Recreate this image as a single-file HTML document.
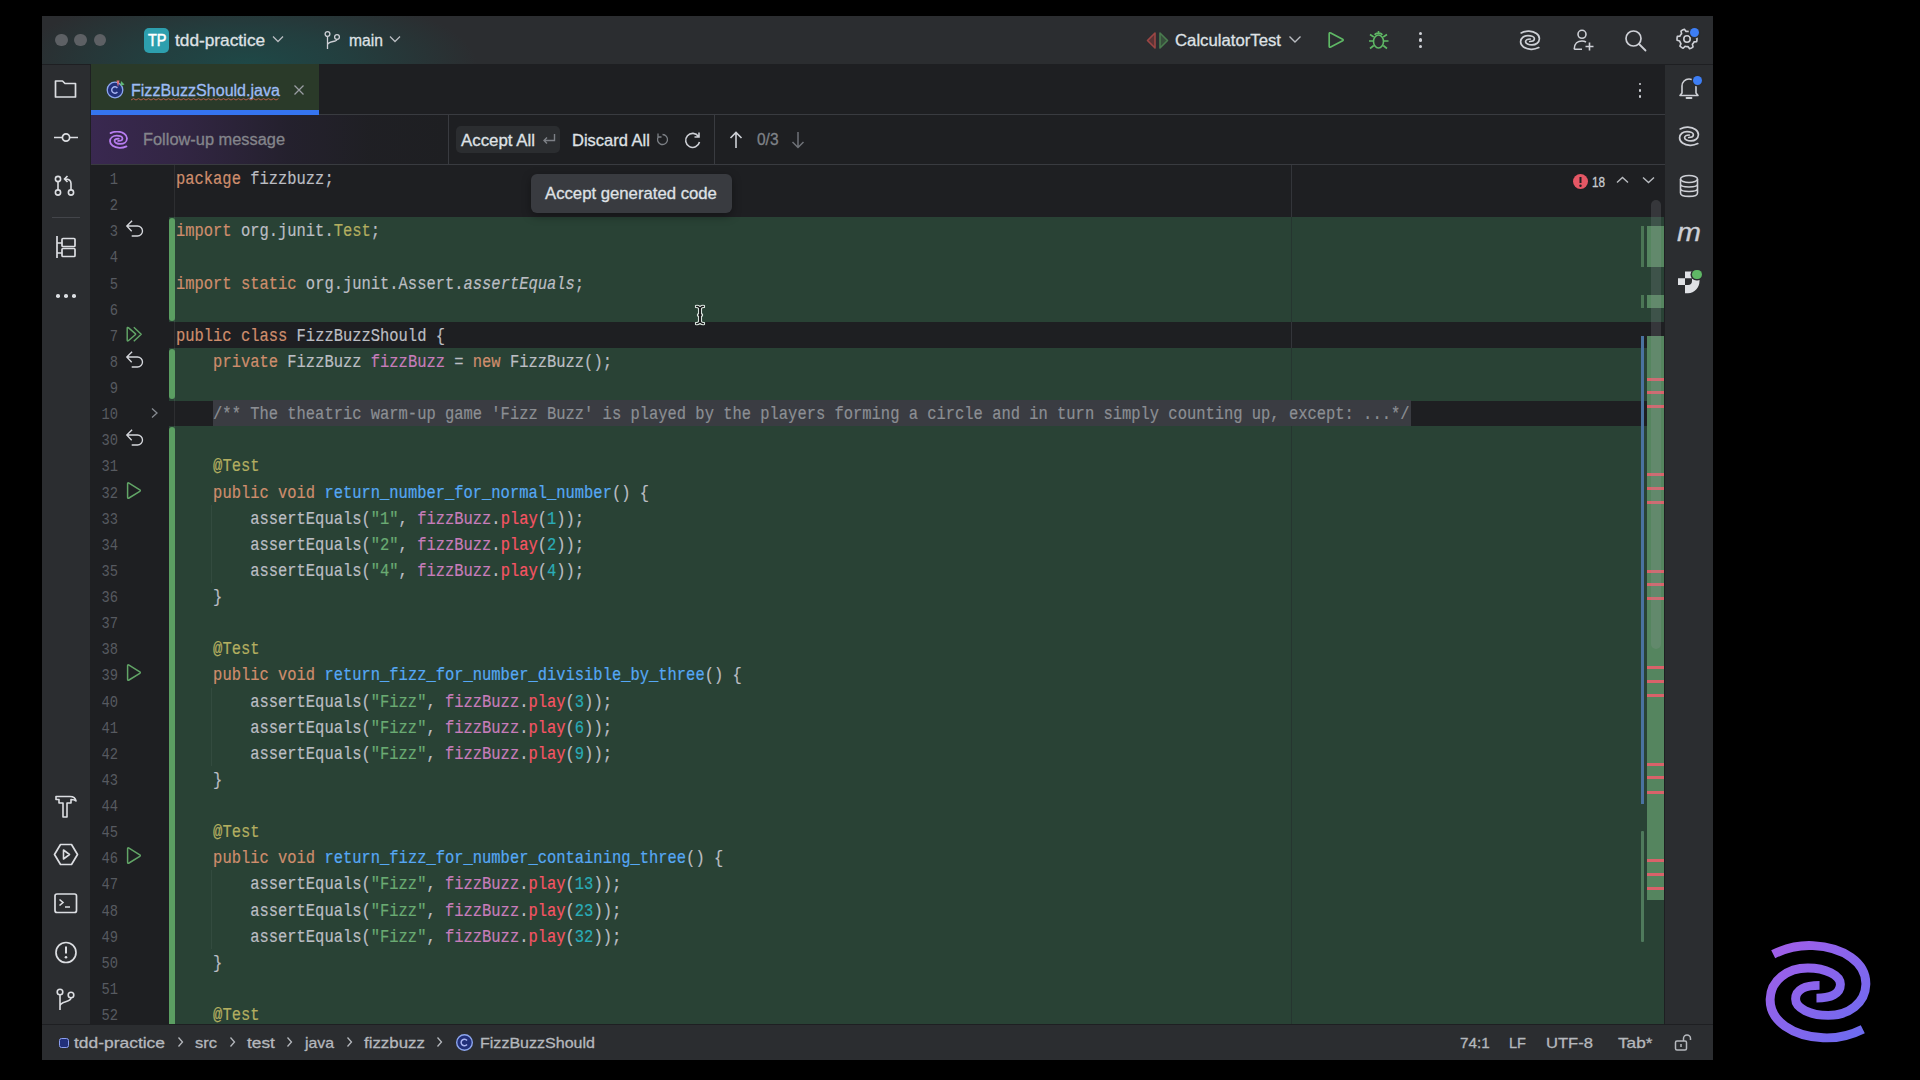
<!DOCTYPE html>
<html><head><meta charset="utf-8"><style>
html,body{margin:0;padding:0}
body{width:1920px;height:1080px;background:#000;position:relative;overflow:hidden;font-family:"Liberation Sans",sans-serif;}
.abs{position:absolute}
#win{position:absolute;left:42px;top:16px;width:1671px;height:1044px;background:#2b2d30;}
#title{position:absolute;left:42px;top:16px;width:1671px;height:48px;background:#2b2d30;overflow:hidden}
#title .glow{position:absolute;left:0;top:0;width:100%;height:100%;background:radial-gradient(ellipse 230px 75px at 205px 48px,rgba(22,90,86,0.6) 0%,rgba(22,90,86,0.38) 45%,rgba(22,90,86,0) 100%)}
#edarea{position:absolute;left:91px;top:64px;width:1574px;height:960px;background:#1e1f22}
#leftstrip{position:absolute;left:42px;top:64px;width:48px;height:960px;background:#2b2d30;border-right:1px solid #1e1f22}
#rightstrip{position:absolute;left:1665px;top:64px;width:48px;height:960px;background:#2b2d30;}
#status{position:absolute;left:42px;top:1024px;width:1671px;height:36px;background:#2b2d30;border-top:1px solid #1e1f22;box-sizing:border-box}
.ui{position:absolute;white-space:pre;font-family:"Liberation Sans",sans-serif;color:#dfe1e5;line-height:1;-webkit-text-stroke:0.3px currentColor}
#editor{position:absolute;left:0;top:0;width:1920px;height:1080px;clip-path:inset(165px 255px 56px 91px)}
.gbg{position:absolute;left:169px;width:1495px;background:linear-gradient(90deg,#294235 0,#294235 1122px,#263530 1122px,#263530 1123px,#294235 1123px)}
.foldhl{position:absolute;left:213.3px;width:1197.5px;background:#3a3c42}
.ln{position:absolute;left:70px;width:48px;text-align:right;font-family:"Liberation Mono",monospace;font-size:16px;transform-origin:100% 0;transform:translateY(2.4px) scaleX(0.86);line-height:26.125px;color:#575a60;height:26px}
.code{position:absolute;left:176.2px;white-space:pre;font-family:"Liberation Mono",monospace;font-size:17.8px;line-height:26.125px;color:#bcbec4;height:26px;-webkit-text-stroke:0.2px currentColor;transform-origin:0 0;transform:translateY(1.3px) scaleX(0.86916)}
.code i{font-style:italic}
.gi{position:absolute}
.gbar{position:absolute;left:169px;width:6px;background:#5b9e62;border-radius:3px}
.sep{position:absolute;background:#393b40}

</style></head><body>
<div id="win"></div>
<div id="title"><div class="glow"></div></div>
<div id="leftstrip"></div>
<div id="rightstrip"></div>
<div id="edarea"></div>
<div class="abs" style="left:42px;top:64px;width:1671px;height:1px;background:#1e1f22"></div>
<div class="abs" style="left:1664px;top:64px;width:1px;height:960px;background:#1e1f22"></div>
<div id="status"></div>
<div class="abs" style="left:1291px;top:165px;width:1px;height:859px;background:#33353a"></div>

<div id="editor">
<div class="gbg" style="top:217.250px;height:26.625px"></div>
<div class="gbg" style="top:243.375px;height:26.625px"></div>
<div class="gbg" style="top:269.500px;height:26.625px"></div>
<div class="gbg" style="top:295.625px;height:26.625px"></div>
<div class="gbg" style="top:347.875px;height:26.625px"></div>
<div class="gbg" style="top:374.000px;height:26.625px"></div>
<div class="foldhl" style="top:400.125px;height:26.125px"></div>
<div class="gbg" style="top:426.250px;height:26.625px"></div>
<div class="gbg" style="top:452.375px;height:26.625px"></div>
<div class="gbg" style="top:478.500px;height:26.625px"></div>
<div class="gbg" style="top:504.625px;height:26.625px"></div>
<div class="gbg" style="top:530.750px;height:26.625px"></div>
<div class="gbg" style="top:556.875px;height:26.625px"></div>
<div class="gbg" style="top:583.000px;height:26.625px"></div>
<div class="gbg" style="top:609.125px;height:26.625px"></div>
<div class="gbg" style="top:635.250px;height:26.625px"></div>
<div class="gbg" style="top:661.375px;height:26.625px"></div>
<div class="gbg" style="top:687.500px;height:26.625px"></div>
<div class="gbg" style="top:713.625px;height:26.625px"></div>
<div class="gbg" style="top:739.750px;height:26.625px"></div>
<div class="gbg" style="top:765.875px;height:26.625px"></div>
<div class="gbg" style="top:792.000px;height:26.625px"></div>
<div class="gbg" style="top:818.125px;height:26.625px"></div>
<div class="gbg" style="top:844.250px;height:26.625px"></div>
<div class="gbg" style="top:870.375px;height:26.625px"></div>
<div class="gbg" style="top:896.500px;height:26.625px"></div>
<div class="gbg" style="top:922.625px;height:26.625px"></div>
<div class="gbg" style="top:948.750px;height:26.625px"></div>
<div class="gbg" style="top:974.875px;height:26.625px"></div>
<div class="gbg" style="top:1001.000px;height:26.625px"></div>
<div class="gbg" style="top:1027.125px;height:26.625px"></div>
<div class="abs" style="left:173.5px;top:165px;width:1px;height:860px;background:rgba(255,255,255,0.07)"></div>
<div class="abs" style="left:210.5px;top:504.62px;width:1px;height:78.38px;background:rgba(255,255,255,0.05)"></div>
<div class="abs" style="left:210.5px;top:687.50px;width:1px;height:78.38px;background:rgba(255,255,255,0.05)"></div>
<div class="abs" style="left:210.5px;top:870.38px;width:1px;height:78.38px;background:rgba(255,255,255,0.05)"></div>
<div class="ln" style="top:165.000px">1</div>
<div class="code" style="top:165.000px"><span style="color:#cf8e6d">package</span> fizzbuzz;</div>
<div class="ln" style="top:191.125px">2</div>
<div class="ln" style="top:217.250px">3</div>
<div class="code" style="top:217.250px"><span style="color:#cf8e6d">import</span> org.junit.<span style="color:#b3ae60">Test</span>;</div>
<svg class="gi" style="left:124px;top:217.25px" width="22" height="22" viewBox="0 0 22 22"><path d="M8.1 3.75 L2.8 9 L7.7 14.3 M2.8 9 H13.5 A5 5 0 0 1 13.5 19 H7.7" fill="none" stroke="#d5d7dc" stroke-width="1.35"/></svg>
<div class="ln" style="top:243.375px">4</div>
<div class="ln" style="top:269.500px">5</div>
<div class="code" style="top:269.500px"><span style="color:#cf8e6d">import</span> <span style="color:#cf8e6d">static</span> org.junit.Assert.<i>assertEquals</i>;</div>
<div class="ln" style="top:295.625px">6</div>
<div class="ln" style="top:321.750px">7</div>
<div class="code" style="top:321.750px"><span style="color:#cf8e6d">public</span> <span style="color:#cf8e6d">class</span> FizzBuzzShould {</div>
<svg class="gi" style="left:124px;top:321.75px" width="22" height="22" viewBox="0 0 22 22"><path d="M3.2 6.2 Q3.2 4.9 4.3 5.6 L11.3 11.6 Q12 12.2 11.3 12.8 L4.3 18.7 Q3.2 19.4 3.2 18.1 Z M9.8 5.2 L17.2 12.2 L9.8 19.3" fill="none" stroke="#62a567" stroke-width="1.45" stroke-linejoin="round"/></svg>
<div class="ln" style="top:347.875px">8</div>
<div class="code" style="top:347.875px">    <span style="color:#cf8e6d">private</span> FizzBuzz <span style="color:#c77dbb">fizzBuzz</span> = <span style="color:#cf8e6d">new</span> FizzBuzz();</div>
<svg class="gi" style="left:124px;top:347.88px" width="22" height="22" viewBox="0 0 22 22"><path d="M8.1 3.75 L2.8 9 L7.7 14.3 M2.8 9 H13.5 A5 5 0 0 1 13.5 19 H7.7" fill="none" stroke="#d5d7dc" stroke-width="1.35"/></svg>
<div class="ln" style="top:374.000px">9</div>
<div class="ln" style="top:400.125px">10</div>
<svg class="gi" style="left:150px;top:407.12px" width="10" height="12" viewBox="0 0 10 12"><path d="M2 1.5 L7 6 L2 10.5" fill="none" stroke="#868a91" stroke-width="1.3"/></svg>
<div class="code" style="top:400.125px;color:#8c8f94">    /** The theatric warm-up game 'Fizz Buzz' is played by the players forming a circle and in turn simply counting up, except: ...*/</div>
<div class="ln" style="top:426.250px">30</div>
<svg class="gi" style="left:124px;top:426.25px" width="22" height="22" viewBox="0 0 22 22"><path d="M8.1 3.75 L2.8 9 L7.7 14.3 M2.8 9 H13.5 A5 5 0 0 1 13.5 19 H7.7" fill="none" stroke="#d5d7dc" stroke-width="1.35"/></svg>
<div class="ln" style="top:452.375px">31</div>
<div class="code" style="top:452.375px">    <span style="color:#b3ae60">@Test</span></div>
<div class="ln" style="top:478.500px">32</div>
<div class="code" style="top:478.500px">    <span style="color:#cf8e6d">public</span> <span style="color:#cf8e6d">void</span> <span style="color:#56a8f5">return_number_for_normal_number</span>() {</div>
<svg class="gi" style="left:124px;top:478.50px" width="20" height="22" viewBox="0 0 20 22"><path d="M3.6 4.8 Q3.6 3.3 5 4.1 L15.8 10.9 Q16.8 11.6 15.8 12.3 L5 19 Q3.6 19.8 3.6 18.3 Z" fill="none" stroke="#62a567" stroke-width="1.5" stroke-linejoin="round"/></svg>
<div class="ln" style="top:504.625px">33</div>
<div class="code" style="top:504.625px">        assertEquals(<span style="color:#6aab73">&quot;1&quot;</span>, <span style="color:#c77dbb">fizzBuzz</span>.<span style="color:#f75464">play</span>(<span style="color:#2aacb8">1</span>));</div>
<div class="ln" style="top:530.750px">34</div>
<div class="code" style="top:530.750px">        assertEquals(<span style="color:#6aab73">&quot;2&quot;</span>, <span style="color:#c77dbb">fizzBuzz</span>.<span style="color:#f75464">play</span>(<span style="color:#2aacb8">2</span>));</div>
<div class="ln" style="top:556.875px">35</div>
<div class="code" style="top:556.875px">        assertEquals(<span style="color:#6aab73">&quot;4&quot;</span>, <span style="color:#c77dbb">fizzBuzz</span>.<span style="color:#f75464">play</span>(<span style="color:#2aacb8">4</span>));</div>
<div class="ln" style="top:583.000px">36</div>
<div class="code" style="top:583.000px">    }</div>
<div class="ln" style="top:609.125px">37</div>
<div class="ln" style="top:635.250px">38</div>
<div class="code" style="top:635.250px">    <span style="color:#b3ae60">@Test</span></div>
<div class="ln" style="top:661.375px">39</div>
<div class="code" style="top:661.375px">    <span style="color:#cf8e6d">public</span> <span style="color:#cf8e6d">void</span> <span style="color:#56a8f5">return_fizz_for_number_divisible_by_three</span>() {</div>
<svg class="gi" style="left:124px;top:661.38px" width="20" height="22" viewBox="0 0 20 22"><path d="M3.6 4.8 Q3.6 3.3 5 4.1 L15.8 10.9 Q16.8 11.6 15.8 12.3 L5 19 Q3.6 19.8 3.6 18.3 Z" fill="none" stroke="#62a567" stroke-width="1.5" stroke-linejoin="round"/></svg>
<div class="ln" style="top:687.500px">40</div>
<div class="code" style="top:687.500px">        assertEquals(<span style="color:#6aab73">&quot;Fizz&quot;</span>, <span style="color:#c77dbb">fizzBuzz</span>.<span style="color:#f75464">play</span>(<span style="color:#2aacb8">3</span>));</div>
<div class="ln" style="top:713.625px">41</div>
<div class="code" style="top:713.625px">        assertEquals(<span style="color:#6aab73">&quot;Fizz&quot;</span>, <span style="color:#c77dbb">fizzBuzz</span>.<span style="color:#f75464">play</span>(<span style="color:#2aacb8">6</span>));</div>
<div class="ln" style="top:739.750px">42</div>
<div class="code" style="top:739.750px">        assertEquals(<span style="color:#6aab73">&quot;Fizz&quot;</span>, <span style="color:#c77dbb">fizzBuzz</span>.<span style="color:#f75464">play</span>(<span style="color:#2aacb8">9</span>));</div>
<div class="ln" style="top:765.875px">43</div>
<div class="code" style="top:765.875px">    }</div>
<div class="ln" style="top:792.000px">44</div>
<div class="ln" style="top:818.125px">45</div>
<div class="code" style="top:818.125px">    <span style="color:#b3ae60">@Test</span></div>
<div class="ln" style="top:844.250px">46</div>
<div class="code" style="top:844.250px">    <span style="color:#cf8e6d">public</span> <span style="color:#cf8e6d">void</span> <span style="color:#56a8f5">return_fizz_for_number_containing_three</span>() {</div>
<svg class="gi" style="left:124px;top:844.25px" width="20" height="22" viewBox="0 0 20 22"><path d="M3.6 4.8 Q3.6 3.3 5 4.1 L15.8 10.9 Q16.8 11.6 15.8 12.3 L5 19 Q3.6 19.8 3.6 18.3 Z" fill="none" stroke="#62a567" stroke-width="1.5" stroke-linejoin="round"/></svg>
<div class="ln" style="top:870.375px">47</div>
<div class="code" style="top:870.375px">        assertEquals(<span style="color:#6aab73">&quot;Fizz&quot;</span>, <span style="color:#c77dbb">fizzBuzz</span>.<span style="color:#f75464">play</span>(<span style="color:#2aacb8">13</span>));</div>
<div class="ln" style="top:896.500px">48</div>
<div class="code" style="top:896.500px">        assertEquals(<span style="color:#6aab73">&quot;Fizz&quot;</span>, <span style="color:#c77dbb">fizzBuzz</span>.<span style="color:#f75464">play</span>(<span style="color:#2aacb8">23</span>));</div>
<div class="ln" style="top:922.625px">49</div>
<div class="code" style="top:922.625px">        assertEquals(<span style="color:#6aab73">&quot;Fizz&quot;</span>, <span style="color:#c77dbb">fizzBuzz</span>.<span style="color:#f75464">play</span>(<span style="color:#2aacb8">32</span>));</div>
<div class="ln" style="top:948.750px">50</div>
<div class="code" style="top:948.750px">    }</div>
<div class="ln" style="top:974.875px">51</div>
<div class="ln" style="top:1001.000px">52</div>
<div class="code" style="top:1001.000px">    <span style="color:#b3ae60">@Test</span></div>
<div class="ln" style="top:1027.125px">53</div>
<div class="gbar" style="top:218.25px;height:102.50px"></div>
<div class="gbar" style="top:348.88px;height:50.25px"></div>
<div class="gbar" style="top:427.25px;height:625.00px"></div>
</div>
<div class="abs" style="left:55.2px;top:33.8px;width:12.4px;height:12.4px;border-radius:50%;background:#5d6064"></div>
<div class="abs" style="left:74.4px;top:33.8px;width:12.4px;height:12.4px;border-radius:50%;background:#5d6064"></div>
<div class="abs" style="left:93.7px;top:33.8px;width:12.4px;height:12.4px;border-radius:50%;background:#5d6064"></div>
<div class="abs" style="left:144px;top:28px;width:24.5px;height:24.5px;background:#2d9fae;border-radius:5px"></div>
<div class="ui" style="left:147.50px;top:31.61px;font-size:17px;color:#ffffff;transform:scaleX(0.8502);transform-origin:0 0;-webkit-text-stroke:0.55px #fff;">TP</div>
<div class="ui" style="left:175.00px;top:31.90px;font-size:16.3px;color:#dfe1e5;transform:scaleX(1.0603);transform-origin:0 0;">tdd-practice</div>
<svg class="gi" style="left:272px;top:35px;" width="12" height="9" viewBox="0 0 12 9"><path d="M1 1.5 L6 6.5 L11 1.5" fill="none" stroke="#b9bcc1" stroke-width="1.3"/></svg>
<svg class="gi" style="left:324px;top:30px;" width="17" height="20" viewBox="0 0 17 20"><circle cx="3.5" cy="4" r="2.4" fill="none" stroke="#ced0d6" stroke-width="1.3"/><circle cx="13" cy="7" r="2.4" fill="none" stroke="#ced0d6" stroke-width="1.3"/><path d="M3.5 6.4 V19 M3.5 15 C3.5 11 13 12 13 9.4" fill="none" stroke="#ced0d6" stroke-width="1.3"/></svg>
<div class="ui" style="left:349.30px;top:31.90px;font-size:16.3px;color:#dfe1e5;transform:scaleX(0.9612);transform-origin:0 0;">main</div>
<svg class="gi" style="left:389px;top:35px;" width="12" height="9" viewBox="0 0 12 9"><path d="M1 1.5 L6 6.5 L11 1.5" fill="none" stroke="#b9bcc1" stroke-width="1.3"/></svg>
<svg class="gi" style="left:1145px;top:31px;" width="26" height="19" viewBox="0 0 26 19"><path d="M10 2 L2.5 9.5 L10 17 Z" fill="rgba(150,60,60,0.45)" stroke="#9c4644" stroke-width="1.6" stroke-linejoin="round"/><path d="M15 2 L22.5 9.5 L15 17 Z" fill="rgba(70,120,75,0.45)" stroke="#4a7b4e" stroke-width="1.6" stroke-linejoin="round"/></svg>
<div class="ui" style="left:1175.00px;top:32.03px;font-size:16.5px;color:#dfe1e5;transform:scaleX(1.0141);transform-origin:0 0;">CalculatorTest</div>
<svg class="gi" style="left:1288px;top:35px;" width="14" height="10" viewBox="0 0 14 10"><path d="M1.5 1.5 L7 7 L12.5 1.5" fill="none" stroke="#b9bcc1" stroke-width="1.4"/></svg>
<svg class="gi" style="left:1326px;top:30px;" width="20" height="20" viewBox="0 0 20 20"><path d="M3.2 3.8 Q3.2 2.2 4.7 3 L16.6 9.2 Q17.8 10 16.6 10.8 L4.7 17 Q3.2 17.8 3.2 16.2 Z" fill="none" stroke="#5fb865" stroke-width="1.7" stroke-linejoin="round"/></svg>
<svg class="gi" style="left:1367px;top:29px;" width="23" height="22" viewBox="0 0 23 22"><ellipse cx="11.5" cy="12.5" rx="5" ry="6.5" fill="none" stroke="#5fb865" stroke-width="1.6"/><path d="M8 6 C8 3.5 15 3.5 15 6 M6.5 12 H2 M17 12 H21.5 M6.8 8 L3 5.5 M16.2 8 L20 5.5 M6.8 16.5 L3 19.5 M16.2 16.5 L20 19.5 M11.5 2 V4" fill="none" stroke="#5fb865" stroke-width="1.6"/></svg>
<div class="abs" style="left:1419.3px;top:31.9px;width:3.2px;height:3.2px;border-radius:50%;background:#ced0d6"></div>
<div class="abs" style="left:1419.3px;top:38.4px;width:3.2px;height:3.2px;border-radius:50%;background:#ced0d6"></div>
<div class="abs" style="left:1419.3px;top:44.9px;width:3.2px;height:3.2px;border-radius:50%;background:#ced0d6"></div>
<svg class="gi" style="left:1519px;top:29.5px;" width="22" height="21" viewBox="-1 -0.5 22 21"><path d="M1.2,2.4 C4,1 7,0.6 9,0.7 C15,1 19.5,4 19.4,8.3 C19.3,12 16,14.4 12,14.4 C8.5,14.4 5.6,13 5.6,11.2 C5.6,9.3 7.5,8.5 10.3,8.5 M18.8,17.1 C16,18.5 13,18.9 11,18.8 C5,18.5 0.5,15.5 0.6,11.2 C0.7,7.5 4,5.1 8,5.1 C11.5,5.1 14.4,6.5 14.4,8.3 C14.4,10.2 12.5,11 9.7,11" fill="none" stroke="#ced0d6" stroke-width="1.7" stroke-linecap="round"/></svg>
<svg class="gi" style="left:1572px;top:28px;" width="24" height="24" viewBox="0 0 24 24"><circle cx="10" cy="6.3" r="4" fill="none" stroke="#ced0d6" stroke-width="1.6"/><path d="M2.2 21.2 C2.2 15.5 6 13 10 13 C11.5 13 12.8 13.3 14 14 M2.2 21.2 H10 M17.5 14.5 V22.5 M13.5 18.5 H21.5" fill="none" stroke="#ced0d6" stroke-width="1.6"/></svg>
<svg class="gi" style="left:1624px;top:29px;" width="23" height="23" viewBox="0 0 23 23"><circle cx="9.5" cy="9.5" r="7.5" fill="none" stroke="#ced0d6" stroke-width="1.7"/><path d="M15 15 L21.5 21.5" stroke="#ced0d6" stroke-width="1.8" stroke-linecap="round"/></svg>
<svg class="gi" style="left:1676px;top:28px;" width="22" height="22" viewBox="0 0 22 22"><polygon points="21.00,11.00 20.91,12.31 20.66,13.59 18.02,13.91 17.58,14.80 17.03,15.63 16.37,16.37 17.09,18.93 16.00,19.66 14.83,20.24 13.59,20.66 11.99,18.53 11.00,18.60 10.01,18.53 9.03,18.34 7.17,20.24 6.00,19.66 4.91,18.93 3.93,18.07 4.97,15.63 4.42,14.80 3.98,13.91 3.66,12.97 1.09,12.31 1.00,11.00 1.09,9.69 1.34,8.41 3.98,8.09 4.42,7.20 4.97,6.37 5.63,5.63 4.91,3.07 6.00,2.34 7.17,1.76 8.41,1.34 10.01,3.47 11.00,3.40 11.99,3.47 12.97,3.66 14.83,1.76 16.00,2.34 17.09,3.07 18.07,3.93 17.03,6.37 17.58,7.20 18.02,8.09 18.34,9.03 20.91,9.69" fill="none" stroke="#ced0d6" stroke-width="1.6" stroke-linejoin="round"/><circle cx="11" cy="11" r="3.2" fill="none" stroke="#ced0d6" stroke-width="1.6"/></svg>
<div class="abs" style="left:1689.5px;top:27.5px;width:9px;height:9px;border-radius:50%;background:#3d7ef5;box-shadow:0 0 0 1.5px #2b2d30"></div>
<div class="abs" style="left:91px;top:64px;width:228px;height:50px;background:#2a3a29;"></div>
<div class="abs" style="left:91px;top:110px;width:228px;height:4.5px;background:#3574f0;"></div>
<div class="abs" style="left:319px;top:114px;width:1346px;height:1px;background:#393b40;"></div>
<svg class="gi" style="left:105px;top:78px;" width="22" height="22" viewBox="0 0 22 22"><circle cx="10" cy="12" r="7.8" fill="#22307a" stroke="#8da6ee" stroke-width="1.3"/><path d="M12.4 10 A3.2 3.2 0 1 0 12.4 14" fill="none" stroke="#a9b4f2" stroke-width="1.4"/><path d="M11.5 2.5 L14.5 2.5 L13 9 Z" fill="#e0707a"/><path d="M16 3 L19.5 6.5 L15.5 8 Z" fill="#5fb872"/></svg>
<div class="ui" style="left:131.00px;top:82.92px;font-size:15.8px;color:#9dbcf4;transform:scaleX(1.0157);transform-origin:0 0;">FizzBuzzShould.java</div>
<svg class="gi" style="left:0px;top:0px;" width="300" height="110" viewBox="0 0 300 110"><path d="M131.0 100L133.5 98.6L136.0 100L138.5 98.6L141.0 100L143.5 98.6L146.0 100L148.5 98.6L151.0 100L153.5 98.6L156.0 100L158.5 98.6L161.0 100L163.5 98.6L166.0 100L168.5 98.6L171.0 100L173.5 98.6L176.0 100L178.5 98.6L181.0 100L183.5 98.6L186.0 100L188.5 98.6L191.0 100L193.5 98.6L196.0 100L198.5 98.6L201.0 100L203.5 98.6L206.0 100L208.5 98.6L211.0 100L213.5 98.6L216.0 100L218.5 98.6L221.0 100L223.5 98.6L226.0 100L228.5 98.6L231.0 100L233.5 98.6L236.0 100L238.5 98.6L241.0 100L243.5 98.6L246.0 100L248.5 98.6L251.0 100L253.5 98.6L256.0 100L258.5 98.6L261.0 100L263.5 98.6L266.0 100L268.5 98.6L271.0 100L273.5 98.6L276.0 100L278.5 98.6" fill="none" stroke="#c2624f" stroke-width="0.9"/></svg>
<svg class="gi" style="left:293px;top:84px;" width="12" height="12" viewBox="0 0 12 12"><path d="M1.5 1.5 L10.5 10.5 M10.5 1.5 L1.5 10.5" stroke="#9a9da3" stroke-width="1.3"/></svg>
<div class="abs" style="left:1638.5px;top:82.6px;width:2.8px;height:2.8px;border-radius:50%;background:#ced0d6"></div>
<div class="abs" style="left:1638.5px;top:88.8px;width:2.8px;height:2.8px;border-radius:50%;background:#ced0d6"></div>
<div class="abs" style="left:1638.5px;top:95.0px;width:2.8px;height:2.8px;border-radius:50%;background:#ced0d6"></div>
<div class="abs" style="left:91px;top:115px;width:357px;height:49px;background:linear-gradient(90deg,rgba(74,46,108,0.62) 0%,rgba(70,44,100,0.5) 25%,rgba(50,36,72,0.3) 55%,rgba(40,34,50,0.12) 78%,rgba(30,31,34,0) 100%)"></div>
<div class="abs" style="left:91px;top:164px;width:1574px;height:1px;background:#393b40;"></div>
<div class="abs" style="left:448px;top:115px;width:1px;height:49px;background:#393b40;"></div>
<div class="abs" style="left:714px;top:115px;width:1px;height:49px;background:#393b40;"></div>
<svg class="gi" style="left:109px;top:131px;" width="19" height="18" viewBox="0 0 20 20"><path d="M1.2,2.4 C4,1 7,0.6 9,0.7 C15,1 19.5,4 19.4,8.3 C19.3,12 16,14.4 12,14.4 C8.5,14.4 5.6,13 5.6,11.2 C5.6,9.3 7.5,8.5 10.3,8.5 M18.8,17.1 C16,18.5 13,18.9 11,18.8 C5,18.5 0.5,15.5 0.6,11.2 C0.7,7.5 4,5.1 8,5.1 C11.5,5.1 14.4,6.5 14.4,8.3 C14.4,10.2 12.5,11 9.7,11" fill="none" stroke="#b77df0" stroke-width="2" stroke-linecap="round"/></svg>
<div class="ui" style="left:143.00px;top:131.75px;font-size:16px;color:#84858b;transform:scaleX(1.0236);transform-origin:0 0;">Follow-up message</div>
<div class="abs" style="left:456px;top:126px;width:104px;height:27px;background:#2b2d30;border-radius:5px"></div>
<div class="ui" style="left:461.00px;top:132.08px;font-size:16.2px;color:#dfe1e5;transform:scaleX(1.0405);transform-origin:0 0;">Accept All</div>
<svg class="gi" style="left:541px;top:132px;" width="16" height="14" viewBox="0 0 16 14"><path d="M13.5 2 V8.5 H3 M6 5.5 L3 8.5 L6 11.5" fill="none" stroke="#7d8086" stroke-width="1.4"/></svg>
<div class="ui" style="left:572.00px;top:132.08px;font-size:16.2px;color:#dfe1e5;transform:scaleX(1.0190);transform-origin:0 0;">Discard All</div>
<svg class="gi" style="left:656px;top:132px;" width="13" height="14" viewBox="0 0 13 14"><path d="M2.5 4.5 A5 5 0 1 0 6.5 2.5 M2 1.5 V5 H5.5" fill="none" stroke="#7d8086" stroke-width="1.3"/></svg>
<svg class="gi" style="left:683px;top:130px;" width="20" height="20" viewBox="0 0 20 20"><path d="M15.5 6.5 A7 7 0 1 0 16.5 12 M16 2.5 V7 H11.5" fill="none" stroke="#ced0d6" stroke-width="1.6"/></svg>
<svg class="gi" style="left:728px;top:130px;" width="16" height="20" viewBox="0 0 16 20"><path d="M8 2.5 V18 M2.5 8 L8 2.5 L13.5 8" fill="none" stroke="#ced0d6" stroke-width="1.6"/></svg>
<div class="ui" style="left:756.50px;top:132.25px;font-size:16px;color:#7f8288;transform:scaleX(0.9667);transform-origin:0 0;">0/3</div>
<svg class="gi" style="left:790px;top:130px;" width="16" height="20" viewBox="0 0 16 20"><path d="M8 2 V17.5 M2.5 12 L8 17.5 L13.5 12" fill="none" stroke="#6f7278" stroke-width="1.5"/></svg>
<div class="abs" style="left:530.5px;top:173.5px;width:201px;height:39px;background:#393b40;border-radius:6px;box-shadow:0 3px 10px rgba(0,0,0,0.35)"></div>
<div class="ui" style="left:545.00px;top:185.48px;font-size:16.2px;color:#dfe1e5;transform:scaleX(1.0323);transform-origin:0 0;">Accept generated code</div>
<svg class="gi" style="left:1677px;top:75px;" width="24" height="26" viewBox="0 0 24 26"><path d="M5 18 V11 A7 7 0 0 1 19 11 V18 L21 20.5 H3 Z" fill="none" stroke="#ced0d6" stroke-width="1.6" stroke-linejoin="round"/><path d="M9.5 23 H14.5" stroke="#ced0d6" stroke-width="1.8" stroke-linecap="round"/></svg>
<div class="abs" style="left:1692.5px;top:76.2px;width:9px;height:9px;border-radius:50%;background:#3d7ef5;box-shadow:0 0 0 1.5px #2b2d30"></div>
<svg class="gi" style="left:1678px;top:126px;" width="22" height="21" viewBox="-1 -0.5 22 21"><path d="M1.2,2.4 C4,1 7,0.6 9,0.7 C15,1 19.5,4 19.4,8.3 C19.3,12 16,14.4 12,14.4 C8.5,14.4 5.6,13 5.6,11.2 C5.6,9.3 7.5,8.5 10.3,8.5 M18.8,17.1 C16,18.5 13,18.9 11,18.8 C5,18.5 0.5,15.5 0.6,11.2 C0.7,7.5 4,5.1 8,5.1 C11.5,5.1 14.4,6.5 14.4,8.3 C14.4,10.2 12.5,11 9.7,11" fill="none" stroke="#ced0d6" stroke-width="1.7" stroke-linecap="round"/></svg>
<svg class="gi" style="left:1678px;top:174px;" width="22" height="24" viewBox="0 0 22 24"><ellipse cx="11" cy="5" rx="8.5" ry="3.5" fill="none" stroke="#ced0d6" stroke-width="1.6"/><path d="M2.5 5 V19 C2.5 23.5 19.5 23.5 19.5 19 V5 M2.5 10 C2.5 14 19.5 14 19.5 10 M2.5 14.5 C2.5 18.5 19.5 18.5 19.5 14.5" fill="none" stroke="#ced0d6" stroke-width="1.6"/></svg>
<div class="ui" style="left:1677px;top:220px;font-size:25px;font-style:italic;color:#ced0d6;transform:scaleX(1.15);transform-origin:0 0">m</div>
<svg class="gi" style="left:1677px;top:270px;" width="24" height="24" viewBox="0 0 24 24"><path d="M1 8.2 H8 V15 H1 Z M8 1.5 H15 V8.2 H8 Z" fill="#dfe1e5"/><path d="M8 23.2 V15 H11 C13.5 15 15 13.5 15 11 V8.2 H22.5 V11 C22.5 17.5 17.5 23.2 11 23.2 Z" fill="#dfe1e5"/></svg>
<div class="abs" style="left:1692.3px;top:269.5px;width:9.5px;height:9.5px;border-radius:50%;background:#5fb865;box-shadow:0 0 0 1.5px #2b2d30"></div>
<svg class="gi" style="left:53px;top:78px;" width="26" height="22" viewBox="0 0 26 22"><path d="M2.5 3 H9.5 L12 5.5 H22.5 V19 H2.5 Z" fill="none" stroke="#dcdee2" stroke-width="1.7" stroke-linejoin="round"/></svg>
<svg class="gi" style="left:52px;top:130px;" width="28" height="16" viewBox="0 0 28 16"><circle cx="14" cy="7.5" r="3.6" fill="none" stroke="#dcdee2" stroke-width="1.7"/><path d="M2 7.5 H10.4 M17.6 7.5 H26" stroke="#dcdee2" stroke-width="1.7"/></svg>
<svg class="gi" style="left:53px;top:174px;" width="24" height="24" viewBox="0 0 24 24"><circle cx="5" cy="5" r="2.6" fill="none" stroke="#dcdee2" stroke-width="1.6"/><circle cx="5" cy="18.5" r="2.6" fill="none" stroke="#dcdee2" stroke-width="1.6"/><circle cx="18" cy="18.5" r="2.6" fill="none" stroke="#dcdee2" stroke-width="1.6"/><path d="M5 7.6 V15.9 M18 15.9 V9.5 C18 6.5 16 5 12 5 M14.5 2 L11.5 5 L14.5 8" fill="none" stroke="#dcdee2" stroke-width="1.6"/></svg>
<div class="abs" style="left:52px;top:217px;width:28px;height:1px;background:#43454a;"></div>
<svg class="gi" style="left:54px;top:234px;" width="24" height="26" viewBox="0 0 24 26"><path d="M3 2 V24 M3 9 H8 M3 19 H8" fill="none" stroke="#dcdee2" stroke-width="1.7"/><rect x="8" y="4.5" width="13" height="8" rx="1" fill="none" stroke="#dcdee2" stroke-width="1.7"/><rect x="8" y="14.5" width="13" height="8" rx="1" fill="none" stroke="#dcdee2" stroke-width="1.7"/></svg>
<div class="abs" style="left:56.2px;top:294.2px;width:3.6px;height:3.6px;border-radius:50%;background:#dcdee2"></div>
<div class="abs" style="left:64.2px;top:294.2px;width:3.6px;height:3.6px;border-radius:50%;background:#dcdee2"></div>
<div class="abs" style="left:72.2px;top:294.2px;width:3.6px;height:3.6px;border-radius:50%;background:#dcdee2"></div>
<svg class="gi" style="left:53px;top:793px;" width="26" height="27" viewBox="0 0 26 27"><path d="M3 3.5 H17 C20 3.5 22.5 5 23 8 C21.5 6.5 20 6.5 18 6.5 V10 H14 V24 H10 V10 H6 V6.5 H3 Z" fill="none" stroke="#dcdee2" stroke-width="1.6" stroke-linejoin="round"/></svg>
<svg class="gi" style="left:53px;top:842px;" width="26" height="25" viewBox="0 0 26 25"><path d="M7.5 2.5 H18.5 L24.5 12.5 L18.5 22.5 H7.5 L1.5 12.5 Z" fill="none" stroke="#dcdee2" stroke-width="1.7" stroke-linejoin="round"/><path d="M10.5 8 L16.5 12.5 L10.5 17 Z" fill="none" stroke="#dcdee2" stroke-width="1.6" stroke-linejoin="round"/></svg>
<svg class="gi" style="left:53px;top:891px;" width="26" height="25" viewBox="0 0 26 25"><rect x="2" y="3" width="21.5" height="18.5" rx="2" fill="none" stroke="#dcdee2" stroke-width="1.7"/><path d="M6.5 8.5 L10 11.5 L6.5 14.5 M12 16 H17" fill="none" stroke="#dcdee2" stroke-width="1.6"/></svg>
<svg class="gi" style="left:53px;top:940px;" width="26" height="25" viewBox="0 0 26 25"><circle cx="13" cy="12.5" r="10" fill="none" stroke="#dcdee2" stroke-width="1.7"/><path d="M13 6.5 V13.5" stroke="#dcdee2" stroke-width="2"/><circle cx="13" cy="17.2" r="1.3" fill="#dcdee2"/></svg>
<svg class="gi" style="left:53px;top:987px;" width="26" height="25" viewBox="0 0 26 25"><circle cx="7" cy="5" r="2.8" fill="none" stroke="#dcdee2" stroke-width="1.6"/><circle cx="18" cy="8" r="2.8" fill="none" stroke="#dcdee2" stroke-width="1.6"/><path d="M7 7.8 V23 M7 19 C7 14 18 15.5 18 10.8" fill="none" stroke="#dcdee2" stroke-width="1.6"/></svg>
<div class="abs" style="left:59.2px;top:1037.8px;width:10.2px;height:10.2px;border:1.5px solid #8a9ef0;background:#22307a;border-radius:2.5px;box-sizing:border-box"></div>
<div class="ui" style="left:74.00px;top:1034.90px;font-size:15px;color:#b5b8bd;transform:scaleX(1.1611);transform-origin:0 0;">tdd-practice</div>
<svg class="gi" style="left:177px;top:1036px;" width="8" height="12" viewBox="0 0 8 12"><path d="M1.5 1.5 L5.5 6 L1.5 10.5" fill="none" stroke="#b5b8bd" stroke-width="1.3"/></svg>
<svg class="gi" style="left:228.5px;top:1036px;" width="8" height="12" viewBox="0 0 8 12"><path d="M1.5 1.5 L5.5 6 L1.5 10.5" fill="none" stroke="#b5b8bd" stroke-width="1.3"/></svg>
<svg class="gi" style="left:286px;top:1036px;" width="8" height="12" viewBox="0 0 8 12"><path d="M1.5 1.5 L5.5 6 L1.5 10.5" fill="none" stroke="#b5b8bd" stroke-width="1.3"/></svg>
<svg class="gi" style="left:345.7px;top:1036px;" width="8" height="12" viewBox="0 0 8 12"><path d="M1.5 1.5 L5.5 6 L1.5 10.5" fill="none" stroke="#b5b8bd" stroke-width="1.3"/></svg>
<svg class="gi" style="left:436px;top:1036px;" width="8" height="12" viewBox="0 0 8 12"><path d="M1.5 1.5 L5.5 6 L1.5 10.5" fill="none" stroke="#b5b8bd" stroke-width="1.3"/></svg>
<div class="ui" style="left:195.00px;top:1034.90px;font-size:15px;color:#b5b8bd;transform:scaleX(1.0986);transform-origin:0 0;">src</div>
<div class="ui" style="left:247.00px;top:1034.90px;font-size:15px;color:#b5b8bd;transform:scaleX(1.1511);transform-origin:0 0;">test</div>
<div class="ui" style="left:304.90px;top:1034.90px;font-size:15px;color:#b5b8bd;transform:scaleX(1.0545);transform-origin:0 0;">java</div>
<div class="ui" style="left:364.00px;top:1034.90px;font-size:15px;color:#b5b8bd;transform:scaleX(1.1228);transform-origin:0 0;">fizzbuzz</div>
<svg class="gi" style="left:455px;top:1033px;" width="19" height="19" viewBox="0 0 19 19"><circle cx="9.5" cy="9.5" r="7.8" fill="#22307a" stroke="#8da6ee" stroke-width="1.4"/><path d="M12 7.4 A3.3 3.3 0 1 0 12 11.6" fill="none" stroke="#a9b4f2" stroke-width="1.5"/></svg>
<div class="ui" style="left:479.50px;top:1034.90px;font-size:15px;color:#b5b8bd;transform:scaleX(1.0693);transform-origin:0 0;">FizzBuzzShould</div>
<div class="ui" style="left:1460.00px;top:1034.90px;font-size:15px;color:#b5b8bd;transform:scaleX(1.0180);transform-origin:0 0;">74:1</div>
<div class="ui" style="left:1509.00px;top:1034.90px;font-size:15px;color:#b5b8bd;transform:scaleX(0.9728);transform-origin:0 0;">LF</div>
<div class="ui" style="left:1546.00px;top:1034.90px;font-size:15px;color:#b5b8bd;transform:scaleX(1.1052);transform-origin:0 0;">UTF-8</div>
<div class="ui" style="left:1617.60px;top:1034.90px;font-size:15px;color:#b5b8bd;transform:scaleX(1.1467);transform-origin:0 0;">Tab*</div>
<svg class="gi" style="left:1673px;top:1033px;" width="21" height="19" viewBox="0 0 21 19"><rect x="2.5" y="8" width="11" height="9" rx="1.5" fill="none" stroke="#b5b8bd" stroke-width="1.5"/><path d="M10.5 8 V5.5 A3.5 3.5 0 0 1 17.5 5.5 V7" fill="none" stroke="#b5b8bd" stroke-width="1.5"/><path d="M8 11 V14" stroke="#b5b8bd" stroke-width="1.5"/></svg>
<svg class="gi" style="left:1762px;top:937px" width="112" height="112" viewBox="-1 -1 22 22"><defs><linearGradient id="lg" x1="0" y1="0" x2="1" y2="1"><stop offset="0" stop-color="#a35ee8"/><stop offset="1" stop-color="#6b6cf0"/></linearGradient></defs><path d="M1.2,2.4 C4,1 7,0.6 9,0.7 C15,1 19.5,4 19.4,8.3 C19.3,12 16,14.4 12,14.4 C8.5,14.4 5.6,13 5.6,11.2 C5.6,9.3 7.5,8.5 10.3,8.5 M18.8,17.1 C16,18.5 13,18.9 11,18.8 C5,18.5 0.5,15.5 0.6,11.2 C0.7,7.5 4,5.1 8,5.1 C11.5,5.1 14.4,6.5 14.4,8.3 C14.4,10.2 12.5,11 9.7,11" fill="none" stroke="url(#lg)" stroke-width="1.75" stroke-linecap="butt"/></svg>
<div class="abs" style="left:1258px;top:165px;width:406px;height:52px;background:transparent"></div>
<svg class="gi" style="left:1572px;top:173px;" width="17" height="17" viewBox="0 0 17 17"><circle cx="8.5" cy="8.5" r="7.5" fill="#e55765"/><path d="M8.5 4 V10" stroke="#1e1f22" stroke-width="2"/><circle cx="8.5" cy="12.8" r="1.2" fill="#1e1f22"/></svg>
<div class="ui" style="left:1591.50px;top:174.95px;font-size:14px;color:#c9ccd1;transform:scaleX(0.8366);transform-origin:0 0;">18</div>
<svg class="gi" style="left:1615px;top:175px;" width="15" height="10" viewBox="0 0 15 10"><path d="M2 7.5 L7.5 2.5 L13 7.5" fill="none" stroke="#b9bcc1" stroke-width="1.4"/></svg>
<svg class="gi" style="left:1641px;top:175px;" width="15" height="10" viewBox="0 0 15 10"><path d="M2 2.5 L7.5 7.5 L13 2.5" fill="none" stroke="#b9bcc1" stroke-width="1.4"/></svg>
<div class="abs" style="left:1641px;top:225.5px;width:2.8px;height:41px;background:#4b7655;"></div>
<div class="abs" style="left:1646.7px;top:225.5px;width:17.3px;height:41px;background:#55855f;"></div>
<div class="abs" style="left:1641px;top:294.5px;width:2.8px;height:13px;background:#4b7655;"></div>
<div class="abs" style="left:1646.7px;top:294.5px;width:17.3px;height:13px;background:#55855f;"></div>
<div class="abs" style="left:1646.7px;top:336px;width:17.3px;height:563.5px;background:#55855f;"></div>
<div class="abs" style="left:1641px;top:336px;width:2.8px;height:468px;background:#4a72a0;"></div>
<div class="abs" style="left:1641px;top:830.5px;width:2.5px;height:111px;background:#4f7a5c;border-radius:1px"></div>
<div class="abs" style="left:1646.7px;top:377.5px;width:17.3px;height:3px;background:#d9626a;"></div>
<div class="abs" style="left:1646.7px;top:391px;width:17.3px;height:3px;background:#d9626a;"></div>
<div class="abs" style="left:1646.7px;top:404.7px;width:17.3px;height:3px;background:#d9626a;"></div>
<div class="abs" style="left:1646.7px;top:472.8px;width:17.3px;height:3px;background:#d9626a;"></div>
<div class="abs" style="left:1646.7px;top:486.6px;width:17.3px;height:3px;background:#d9626a;"></div>
<div class="abs" style="left:1646.7px;top:501.3px;width:17.3px;height:3px;background:#d9626a;"></div>
<div class="abs" style="left:1646.7px;top:570px;width:17.3px;height:3px;background:#d9626a;"></div>
<div class="abs" style="left:1646.7px;top:583.3px;width:17.3px;height:3px;background:#d9626a;"></div>
<div class="abs" style="left:1646.7px;top:596.6px;width:17.3px;height:3px;background:#d9626a;"></div>
<div class="abs" style="left:1646.7px;top:665.8px;width:17.3px;height:3px;background:#d9626a;"></div>
<div class="abs" style="left:1646.7px;top:680.2px;width:17.3px;height:3px;background:#d9626a;"></div>
<div class="abs" style="left:1646.7px;top:693.8px;width:17.3px;height:3px;background:#d9626a;"></div>
<div class="abs" style="left:1646.7px;top:762.5px;width:17.3px;height:3px;background:#d9626a;"></div>
<div class="abs" style="left:1646.7px;top:776.3px;width:17.3px;height:3px;background:#d9626a;"></div>
<div class="abs" style="left:1646.7px;top:790.5px;width:17.3px;height:3px;background:#d9626a;"></div>
<div class="abs" style="left:1646.7px;top:859.1px;width:17.3px;height:3px;background:#d9626a;"></div>
<div class="abs" style="left:1646.7px;top:872.9px;width:17.3px;height:3px;background:#d9626a;"></div>
<div class="abs" style="left:1646.7px;top:886.5px;width:17.3px;height:3px;background:#d9626a;"></div>
<div class="abs" style="left:1651px;top:200px;width:9.5px;height:449px;background:rgba(150,155,160,0.2);border-radius:5px"></div>
<svg class="gi" style="left:693px;top:303px;" width="14" height="24" viewBox="0 0 14 24"><path d="M2.5 2.5 C4.5 2 6 2.5 7 3.5 C8 2.5 9.5 2 11.5 2.5 L11.5 4.5 C10 4.3 9 4.6 8.5 5.5 V11 H9.5 V13 H8.5 V18.5 C9 19.4 10 19.7 11.5 19.5 L11.5 21.5 C9.5 22 8 21.5 7 20.5 C6 21.5 4.5 22 2.5 21.5 L2.5 19.5 C4 19.7 5 19.4 5.5 18.5 V13 H4.5 V11 H5.5 V5.5 C5 4.6 4 4.3 2.5 4.5 Z" fill="#151617" stroke="#d8e2dc" stroke-width="1.1" stroke-linejoin="round"/></svg>
</body></html>
